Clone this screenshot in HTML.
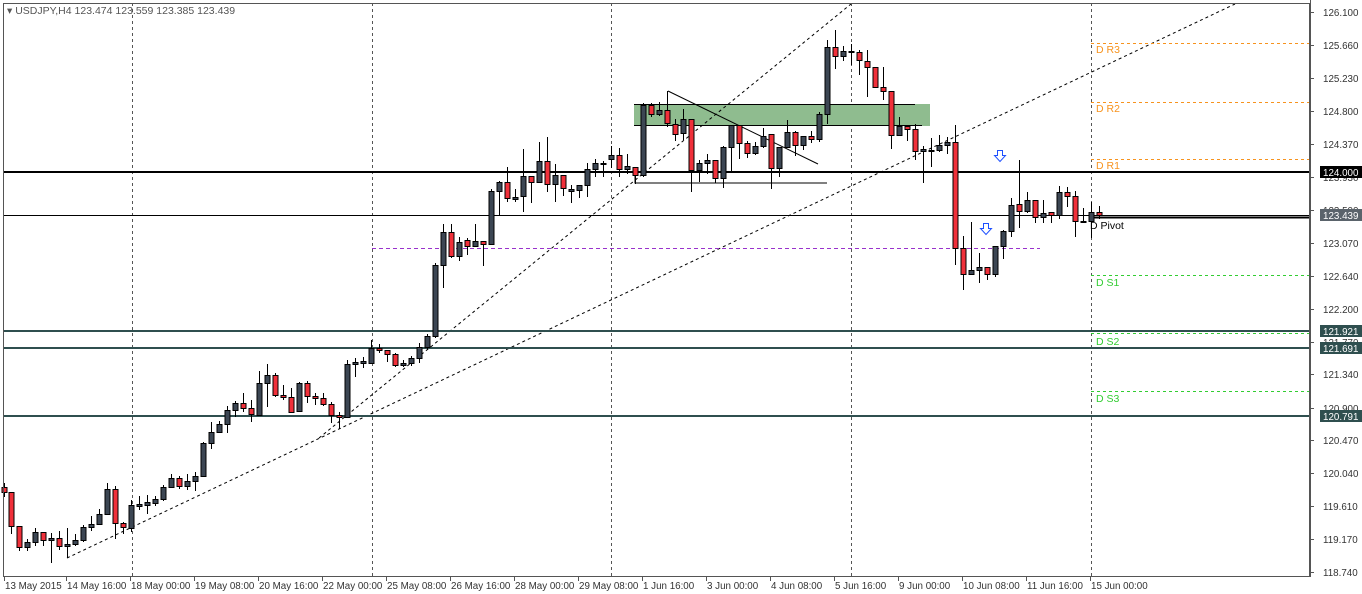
<!DOCTYPE html>
<html><head><meta charset="utf-8"><style>
html,body{margin:0;padding:0;background:#fff;width:1362px;height:594px;overflow:hidden;font-family:"Liberation Sans",sans-serif}
svg text{font-family:"Liberation Sans",sans-serif;font-size:10.5px}
#axis text{font-size:9.8px}
</style></head><body>
<svg id="c" width="1362" height="594" xmlns="http://www.w3.org/2000/svg">
<rect width="1362" height="594" fill="#fff"/>
<g id="grid" stroke="#555" stroke-dasharray="3,3" stroke-width="1">
<line x1="132.5" y1="3" x2="132.5" y2="577"/><line x1="372.5" y1="3" x2="372.5" y2="577"/>
<line x1="611.5" y1="3" x2="611.5" y2="577"/><line x1="851.5" y1="3" x2="851.5" y2="577"/>
<line x1="1091.5" y1="3" x2="1091.5" y2="577"/>
</g>
<rect x="634" y="104" width="296" height="22" fill="#8fbc8f"/>
<line x1="634" y1="104.5" x2="915" y2="104.5" stroke="#000"/>
<line x1="634" y1="125.5" x2="922" y2="125.5" stroke="#000"/>
<g stroke="#000" stroke-width="1" fill="none">
<line x1="668" y1="91" x2="818" y2="164"/>
<polyline points="635,175 635,183 827,183"/>
</g>
<g stroke="#000" stroke-dasharray="3,3" stroke-width="1">
<line x1="67" y1="558" x2="1235" y2="4"/>
<line x1="319" y1="438" x2="851" y2="4"/>
</g>
<line x1="372" y1="248.5" x2="1040" y2="248.5" stroke="#9932cc" stroke-dasharray="4,3"/>
<g stroke-width="2">
<line x1="3" y1="172" x2="1310" y2="172" stroke="#000"/>
<line x1="3" y1="331" x2="1310" y2="331" stroke="#2f4f4f"/>
<line x1="3" y1="348" x2="1310" y2="348" stroke="#2f4f4f"/>
<line x1="3" y1="416" x2="1310" y2="416" stroke="#2f4f4f"/>
<line x1="1091" y1="217.5" x2="1310" y2="217.5" stroke="#000"/>
</g>
<line x1="3" y1="215.5" x2="1310" y2="215.5" stroke="#000"/>
<g stroke-dasharray="3,3">
<line x1="1091" y1="43.5" x2="1310" y2="43.5" stroke="#f7931e"/>
<line x1="1091" y1="102.5" x2="1310" y2="102.5" stroke="#f7931e"/>
<line x1="1091" y1="159.5" x2="1310" y2="159.5" stroke="#f7931e"/>
<line x1="1091" y1="275.5" x2="1310" y2="275.5" stroke="#32cd32"/>
<line x1="1091" y1="333.5" x2="1310" y2="333.5" stroke="#32cd32"/>
<line x1="1091" y1="391.5" x2="1310" y2="391.5" stroke="#32cd32"/>
</g>
<g fill="#f7931e"><text x="1096" y="53">D R3</text><text x="1096" y="112">D R2</text><text x="1096" y="169">D R1</text></g>
<g fill="#32cd32"><text x="1096" y="286">D S1</text><text x="1096" y="345">D S2</text><text x="1096" y="402">D S3</text></g>
<text x="1090" y="229" fill="#000">D Pivot</text>
<g id="candles"></g>
<g fill="#fff" stroke="#1e50ff" stroke-width="1">
<path d="M997.5,150.5h5v5h3l-5.5,6l-5.5,-6h3z"/>
<path d="M983.5,223.5h5v5h3l-5.5,6l-5.5,-6h3z"/>
</g>
<rect x="3.5" y="3.5" width="1306" height="573" fill="none" stroke="#555"/>
<text x="7" y="14" fill="#555">▾ USDJPY,H4  123.474 123.559 123.385 123.439</text>
<g id="axis" fill="#333"></g>
</svg>
<script>
var C=[[4,487,492,483,497,1],[11,492,526,492,534,1],[19,526,547,526,551,1],[27,542,547,539,551,0],[35,532,542,528,546,0],[43,532,540,532,546,1],[51,538,540,533,563,0],[59,538,546,531,550,1],[67,544,546,528,558,0],[75,540,544,534,546,0],[83,527,540,525,542,0],[91,524,527,516,531,0],[99,514,524,509,525,0],[107,489,514,483,514,0],[115,489,523,486,539,1],[123,523,527,522,534,1],[131,505,528,500,532,0],[139,504,506,496,510,0],[147,502,505,495,514,0],[155,499,503,496,506,0],[163,487,499,485,501,0],[171,478,487,474,488,0],[179,478,486,476,489,1],[187,481,486,474,490,0],[195,476,481,472,491,0],[203,443,476,442,477,0],[211,432,443,422,449,0],[219,424,432,421,433,0],[227,410,424,406,433,0],[235,403,410,401,417,0],[243,403,408,393,412,1],[251,408,414,400,422,1],[259,383,415,371,415,0],[267,375,383,364,407,0],[275,375,395,373,397,1],[283,395,397,385,400,1],[291,397,412,388,413,1],[299,383,411,382,412,0],[307,383,396,381,403,1],[315,396,398,393,405,1],[323,398,404,393,406,1],[331,404,415,402,423,1],[339,415,417,412,429,1],[347,364,417,360,418,0],[355,362,364,358,377,0],[363,361,363,357,368,0],[371,348,363,340,363,0],[379,348,350,344,353,1],[387,350,354,350,362,1],[395,354,365,353,367,1],[403,363,365,360,367,0],[411,358,363,356,366,0],[419,347,358,343,363,0],[427,336,347,334,350,0],[435,265,336,263,338,0],[443,232,265,224,288,0],[451,232,256,224,258,1],[459,242,256,237,261,0],[467,240,246,238,255,1],[475,241,246,224,247,0],[483,241,244,241,266,1],[491,191,244,189,245,0],[499,182,191,181,215,0],[507,182,198,167,202,1],[515,197,199,189,202,0],[523,176,196,149,212,0],[531,176,182,176,203,1],[539,161,182,142,183,0],[547,161,184,137,192,1],[555,175,184,164,202,0],[563,175,188,175,196,1],[571,189,191,185,203,0],[579,185,190,185,198,0],[587,169,185,163,197,0],[595,163,169,159,177,0],[603,163,164,161,177,0],[611,155,159,146,168,0],[619,155,169,148,177,1],[627,166,169,154,174,0],[635,167,175,167,184,1],[643,105,175,103,177,0],[651,105,114,103,117,1],[659,110,114,102,116,0],[667,110,123,91,127,1],[675,124,134,119,141,1],[683,119,133,109,140,0],[691,119,170,119,192,1],[699,163,170,160,182,0],[707,160,163,154,174,0],[715,160,178,160,183,1],[723,147,178,146,188,0],[731,125,147,125,171,0],[739,125,143,125,159,1],[747,143,153,141,158,1],[755,146,153,142,155,0],[763,136,146,128,148,0],[771,134,168,134,189,1],[779,147,168,147,177,0],[787,132,147,120,148,0],[795,132,145,131,156,1],[803,136,145,136,150,0],[811,136,139,131,143,1],[819,114,139,112,142,0],[827,47,114,40,124,0],[835,47,56,30,69,1],[843,51,56,46,61,0],[851,51,52,44,65,0],[859,52,60,50,75,1],[867,61,67,50,97,1],[875,67,87,67,88,1],[883,87,91,67,100,1],[891,91,135,91,149,1],[899,126,135,117,135,0],[907,126,129,126,141,1],[915,129,151,124,160,1],[923,149,151,146,183,0],[931,150,151,138,167,0],[939,145,150,135,152,0],[947,142,145,137,154,0],[955,142,248,125,265,1],[963,248,274,236,290,1],[971,270,274,222,275,0],[979,267,270,253,283,0],[987,267,274,267,280,1],[995,246,274,246,277,0],[1003,231,246,230,259,0],[1011,205,231,198,237,0],[1019,204,211,160,228,1],[1027,200,211,192,213,0],[1035,200,217,200,223,1],[1043,213,217,200,223,0],[1051,212,215,212,223,1],[1059,192,215,186,219,0],[1067,192,196,187,207,1],[1075,196,221,191,237,1],[1083,221,222,208,222,0],[1091,212,221,202,238,0],[1099,212,215,206,219,1]];
var s='';C.forEach(function(c){var x=c[0],f=c[5]?'#f0303a':'#3c4653';
s+='<line x1="'+(x+.5)+'" y1="'+c[3]+'" x2="'+(x+.5)+'" y2="'+c[4]+'" stroke="#000"/>';
var h=Math.max(c[2]-c[1],1);
s+='<rect x="'+(x-2)+'" y="'+(c[1]+.5)+'" width="5" height="'+h+'" fill="'+f+'" stroke="#000"/>';});
document.getElementById('candles').innerHTML=s;
var P=[['126.100',12],['125.660',45],['125.230',78],['124.800',111],['124.370',144],['123.930',177],['123.500',210],['123.070',243],['122.640',276],['122.200',309],['121.770',342],['121.340',374],['120.900',408],['120.470',440],['120.040',473],['119.610',506],['119.170',539],['118.740',572]];
var a='';P.forEach(function(p){a+='<line x1="1310" y1="'+p[1]+'.5" x2="1314" y2="'+p[1]+'.5" stroke="#555"/><text x="1323" y="'+(p[1]+4)+'">'+p[0]+'</text>';});
var T=[['124.000',172,'#000'],['123.439',215,'#5a636b'],['121.921',331,'#2f4f4f'],['121.691',348,'#2f4f4f'],['120.791',416,'#2f4f4f']];
T.forEach(function(t){a+='<rect x="1320" y="'+(t[1]-6)+'" width="42" height="12" fill="'+t[2]+'"/><text x="1323" y="'+(t[1]+4)+'" fill="#fff">'+t[0]+'</text>';});
var L=[['13 May 2015',4],['14 May 16:00',66],['18 May 00:00',130],['19 May 08:00',194],['20 May 16:00',258],['22 May 00:00',322],['25 May 08:00',386],['26 May 16:00',450],['28 May 00:00',514],['29 May 08:00',578],['1 Jun 16:00',642],['3 Jun 00:00',706],['4 Jun 08:00',770],['5 Jun 16:00',834],['9 Jun 00:00',898],['10 Jun 08:00',962],['11 Jun 16:00',1026],['15 Jun 00:00',1090]];
L.forEach(function(l){a+='<line x1="'+(l[1]+.5)+'" y1="577" x2="'+(l[1]+.5)+'" y2="581" stroke="#555"/><text x="'+(l[1]+1)+'" y="589">'+l[0]+'</text>';});
a+='<line x1="1310.5" y1="0" x2="1310.5" y2="577" stroke="#555"/>';
document.getElementById('axis').innerHTML=a;
</script>
</body></html>
